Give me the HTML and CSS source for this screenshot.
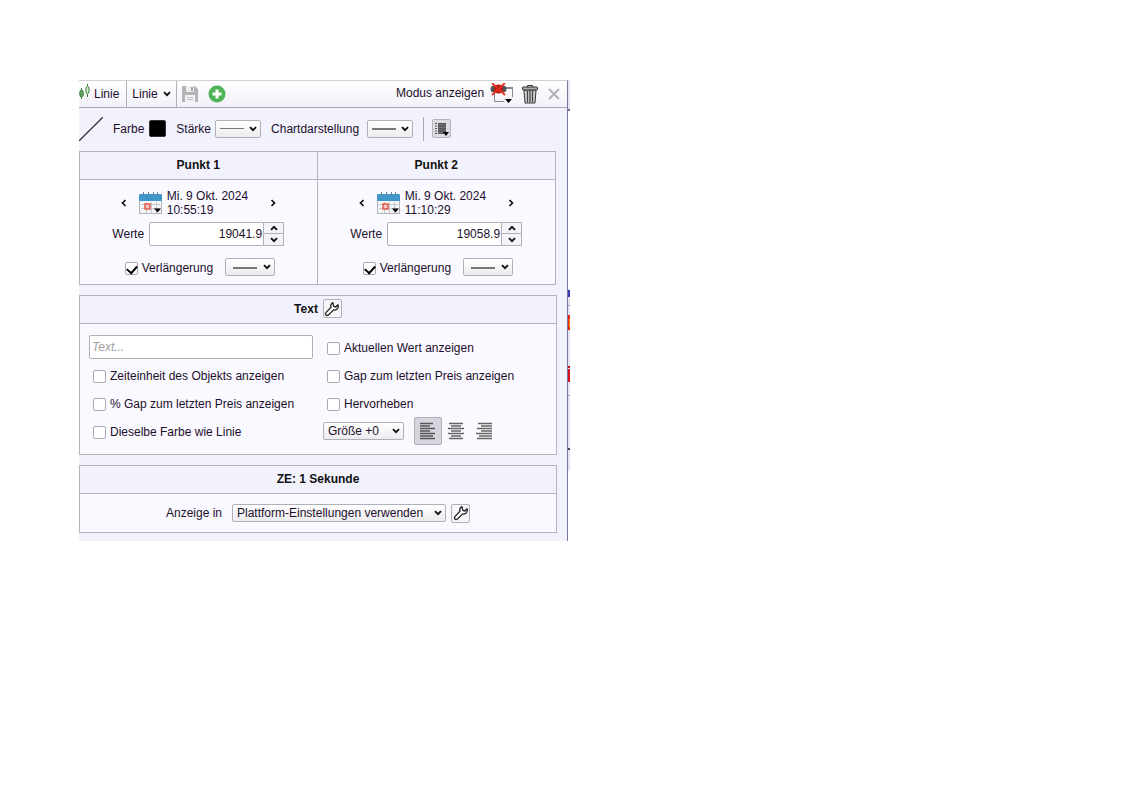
FILE: index.html
```html
<!DOCTYPE html>
<html lang="de">
<head>
<meta charset="UTF-8">
<meta name="viewport" content="width=device-width, initial-scale=1.0">
<title>Linie - Objekteigenschaften</title>
<link rel="stylesheet" href="styles.css">
</head>
<body>

<!-- Shared icons -->
<svg class="icon-defs" aria-hidden="true">
  <symbol id="chevron" viewBox="0 0 8 6">
    <path d="M1 1.2 L4 4.2 L7 1.2" fill="none" stroke="#111" stroke-width="1.9"/>
  </symbol>
  <symbol id="wrench" viewBox="0 0 16 16">
    <path d="M9 1.6 C7 2.6 6.4 4.4 7 6.3 L1.9 11.6 C.6 13.3 2.6 15.4 4.4 14 L9.6 8.9 C12 9.5 14.2 7.8 14.4 5.2 L14 3.8 L11.9 6 L9.7 5.4 L9.3 3.6 Z" fill="#fff" stroke="#222" stroke-width="1.3" stroke-linejoin="round"/>
  </symbol>
  <symbol id="calendar" viewBox="0 0 23 22">
    <rect x=".5" y="4" width="22" height="17.500" fill="#f4f5f7" stroke="#b0b5bb"/>
    <rect x="0" y="2" width="23" height="7" rx="1" fill="#3f97c9"/>
    <path d="M4.500 0v4M9.500 0v4M14.500 0v4M18.500 0v4" stroke="#5a88a4"/>
    <path d="M2 12.500h19M2 16.500h19M7.500 10v11M12.500 10v11M17.500 10v11" stroke="#c3c8ce"/>
    <rect x="6" y="12" width="5" height="5" fill="#f8c9c2" stroke="#df5a4c" stroke-width="1.500"/>
    <path d="M15 16.500h7l-3.500 4z" fill="#000"/>
  </symbol>
</svg>

<main class="dialog">
  <div class="panel">

    <!-- Title bar -->
    <header class="titlebar">
      <div class="tab">
        <svg width="12" height="18" viewBox="0 0 12 18">
          <path d="M2.500 5v11M8.500 1v13" stroke="#357a35"/>
          <ellipse cx="2.500" cy="10.500" rx="1.800" ry="3.500" fill="#69a869" stroke="#357a35"/>
          <ellipse cx="8.500" cy="7" rx="1.600" ry="4" fill="#d9f3d4" stroke="#357a35"/>
        </svg>
        <span>Linie</span>
      </div>
      <button type="button" class="tab-menu">Linie <svg width="8" height="6"><use href="#chevron"/></svg></button>
      <button type="button" class="icon-btn save" aria-label="Speichern">
        <svg width="16" height="16" viewBox="0 0 16 16">
          <path d="M0 0h13l3 3v13H0z" fill="#b4b4b8"/>
          <rect x="4" width="8" height="6" fill="#eee"/>
          <rect x="9" y="1" width="2" height="4" fill="#a4a4a8"/>
          <rect x="3" y="9" width="10" height="7" fill="#f2f2f2"/>
          <path d="M5 11.500h6M5 13.500h6" stroke="#c2c2c6"/>
        </svg>
      </button>
      <button type="button" class="icon-btn" aria-label="Hinzufügen">
        <svg width="18" height="18" viewBox="0 0 18 18">
          <circle cx="9" cy="9" r="8.500" fill="#4fb356"/>
          <path d="M9 4.500v9M4.500 9h9" stroke="#fff" stroke-width="3"/>
        </svg>
      </button>
      <div class="titlebar-right">
        <span class="mode">Modus anzeigen</span>
        <button type="button" class="icon-btn" aria-label="Modus anzeigen">
          <svg width="24" height="22" viewBox="0 0 24 22">
            <path d="M4.500 10v8.500h10M22.500 14V4.500H15" fill="none" stroke="#88888c"/>
            <path d="M15 5h8" stroke="#88888c" stroke-width="2"/>
            <circle cx="4" cy="6" r="3.500" fill="#555"/>
            <circle cx="13" cy="6" r="3.500" fill="#555"/>
            <circle cx="8.500" cy="6" r="4.500" fill="#b31a12"/>
            <circle cx="8.500" cy="6" r="1.800" fill="#300"/>
            <path d="M2 0l13 12M15 0L2 12" stroke="#ee2c20" stroke-width="1.800"/>
            <path d="M15 16h7l-3.500 4z" fill="#000"/>
          </svg>
        </button>
        <button type="button" class="icon-btn" aria-label="Löschen">
          <svg width="16" height="20" viewBox="0 0 16 20">
            <path d="M5.500 3V1.500h5V3" fill="none" stroke="#333"/>
            <path d="M2 6h12l-1 13H3z" fill="#d2d2d2" stroke="#333"/>
            <path d="M5.500 7v11M8 7v11M10.500 7v11" stroke="#444" stroke-width="1.300"/>
            <rect x=".5" y="3" width="15" height="3" rx="1" fill="#aaa" stroke="#333"/>
          </svg>
        </button>
        <button type="button" class="icon-btn close" aria-label="Schließen">
          <svg width="12" height="12" viewBox="0 0 12 12">
            <path d="M1 1l10 10M11 1L1 11" stroke="#b0b0b5" stroke-width="2"/>
          </svg>
        </button>
      </div>
    </header>

    <!-- Line style -->
    <div class="toolbar">
      <svg class="line-preview" width="24" height="24" viewBox="0 0 24 24">
        <path d="M0 24L24 0" stroke="#333" stroke-width="1.300"/>
      </svg>
      <label for="color">Farbe</label>
      <button type="button" id="color" class="color-swatch"></button>
      <label for="strength">Stärke</label>
      <span class="select line-select thin">
        <select id="strength"><option aria-label="1"></option></select>
        <svg width="8" height="6"><use href="#chevron"/></svg>
      </span>
      <label for="chart-style" class="chart-label">Chartdarstellung</label>
      <span class="select line-select">
        <select id="chart-style"><option aria-label="Durchgezogen"></option></select>
        <svg width="8" height="6"><use href="#chevron"/></svg>
      </span>
      <span class="divider"></span>
      <button type="button" class="list-btn" aria-label="Vorlagen">
        <svg width="16" height="14" viewBox="0 0 16 14">
          <path d="M1 1.500h2M1 4h2M1 6.500h2M1 9h2M1 11.500h2" stroke="#555"/>
          <rect x="4" y="1" width="8" height="11" fill="#555"/>
          <path d="M4 3h8M4 5.500h8M4 8h8M4 10.500h8" stroke="#88888c" stroke-width=".7"/>
          <path d="M9 10h6l-3 4z" fill="#000"/>
        </svg>
      </button>
    </div>

    <!-- Anchor points -->
    <section class="points">
      <div class="point">
        <h2>Punkt 1</h2>
        <div class="point-body">
          <div class="date-row">
            <button type="button" class="icon-btn arrow" aria-label="Zurück"><svg width="6" height="8" viewBox="0 0 6 8"><path d="M4.500 1L1.500 4l3 3" fill="none" stroke="#111" stroke-width="1.700"/></svg></button>
            <button type="button" class="icon-btn" aria-label="Datum wählen"><svg width="23" height="22"><use href="#calendar"/></svg></button>
            <time datetime="2024-10-09T10:55:19">Mi. 9 Okt. 2024<br>10:55:19</time>
            <button type="button" class="icon-btn arrow" aria-label="Weiter"><svg width="6" height="8" viewBox="0 0 6 8"><path d="M1.500 1l3 3l-3 3" fill="none" stroke="#111" stroke-width="1.700"/></svg></button>
          </div>
          <div class="value-row">
            <label for="value1">Werte</label>
            <input type="text" id="value1" value="19041.9">
            <span class="spinner">
              <button type="button" aria-label="Erhöhen"><svg class="up" width="8" height="6"><use href="#chevron"/></svg></button>
              <button type="button" aria-label="Verringern"><svg width="8" height="6"><use href="#chevron"/></svg></button>
            </span>
          </div>
          <div class="extend-row">
            <input type="checkbox" id="extend1" checked>
            <label for="extend1">Verlängerung</label>
            <span class="select line-select wide">
              <select aria-label="Linienart Punkt 1"><option aria-label="Durchgezogen"></option></select>
              <svg width="8" height="6"><use href="#chevron"/></svg>
            </span>
          </div>
        </div>
      </div>
      <div class="point">
        <h2>Punkt 2</h2>
        <div class="point-body">
          <div class="date-row">
            <button type="button" class="icon-btn arrow" aria-label="Zurück"><svg width="6" height="8" viewBox="0 0 6 8"><path d="M4.500 1L1.500 4l3 3" fill="none" stroke="#111" stroke-width="1.700"/></svg></button>
            <button type="button" class="icon-btn" aria-label="Datum wählen"><svg width="23" height="22"><use href="#calendar"/></svg></button>
            <time datetime="2024-10-09T11:10:29">Mi. 9 Okt. 2024<br>11:10:29</time>
            <button type="button" class="icon-btn arrow" aria-label="Weiter"><svg width="6" height="8" viewBox="0 0 6 8"><path d="M1.500 1l3 3l-3 3" fill="none" stroke="#111" stroke-width="1.700"/></svg></button>
          </div>
          <div class="value-row">
            <label for="value2">Werte</label>
            <input type="text" id="value2" value="19058.9">
            <span class="spinner">
              <button type="button" aria-label="Erhöhen"><svg class="up" width="8" height="6"><use href="#chevron"/></svg></button>
              <button type="button" aria-label="Verringern"><svg width="8" height="6"><use href="#chevron"/></svg></button>
            </span>
          </div>
          <div class="extend-row">
            <input type="checkbox" id="extend2" checked>
            <label for="extend2">Verlängerung</label>
            <span class="select line-select wide">
              <select aria-label="Linienart Punkt 2"><option aria-label="Durchgezogen"></option></select>
              <svg width="8" height="6"><use href="#chevron"/></svg>
            </span>
          </div>
        </div>
      </div>
    </section>

    <!-- Text -->
    <section class="group">
      <h2>Text <button type="button" class="wrench-btn" aria-label="Texteinstellungen"><svg width="16" height="16"><use href="#wrench"/></svg></button></h2>
      <div class="text-grid">
        <input type="text" class="text-input" placeholder="Text..." aria-label="Text">
        <div class="check"><input type="checkbox" id="current"><label for="current">Aktuellen Wert anzeigen</label></div>
        <div class="check"><input type="checkbox" id="unit"><label for="unit">Zeiteinheit des Objekts anzeigen</label></div>
        <div class="check"><input type="checkbox" id="gap"><label for="gap">Gap zum letzten Preis anzeigen</label></div>
        <div class="check"><input type="checkbox" id="gap-percent"><label for="gap-percent">% Gap zum letzten Preis anzeigen</label></div>
        <div class="check"><input type="checkbox" id="highlight"><label for="highlight">Hervorheben</label></div>
        <div class="check"><input type="checkbox" id="same-color"><label for="same-color">Dieselbe Farbe wie Linie</label></div>
        <div class="format">
          <span class="select size-select">
            <select aria-label="Größe"><option>Größe +0</option></select>
            <svg width="8" height="6"><use href="#chevron"/></svg>
          </span>
          <button type="button" class="align-btn active" aria-label="Linksbündig">
            <svg width="16" height="18" viewBox="0 0 16 18"><path d="M0 1.500h13M0 4h10M0 6.500h15M0 9h10M0 11.500h15M0 14h13M0 16.500h15" stroke="#555" stroke-width="1.500"/></svg>
          </button>
          <button type="button" class="align-btn" aria-label="Zentriert">
            <svg width="16" height="18" viewBox="0 0 16 18"><path d="M1 1.500h14M3 4h10M0 6.500h16M3 9h10M0 11.500h16M3 14h10M1 16.500h14" stroke="#666" stroke-width="1.500"/></svg>
          </button>
          <button type="button" class="align-btn" aria-label="Rechtsbündig">
            <svg width="16" height="18" viewBox="0 0 16 18"><path d="M2 1.500h14M5 4h11M1 6.500h15M5 9h11M0 11.500h16M3 14h13M1 16.500h15" stroke="#666" stroke-width="1.500"/></svg>
          </button>
        </div>
      </div>
    </section>

    <!-- Time unit -->
    <section class="group">
      <h2>ZE: 1 Sekunde</h2>
      <div class="unit-row">
        <label for="show-in">Anzeige in</label>
        <span class="select platform-select">
          <select id="show-in"><option>Plattform-Einstellungen verwenden</option></select>
          <svg width="8" height="6"><use href="#chevron"/></svg>
        </span>
        <button type="button" class="wrench-btn" aria-label="Plattform-Einstellungen"><svg width="16" height="16"><use href="#wrench"/></svg></button>
      </div>
    </section>
  </div>

  <!-- Visible edge of the chart behind the dialog -->
  <svg class="chart-edge" width="2" height="391" viewBox="0 0 2 391">
    <rect width="2" height="391" fill="#e4e4f2"/>
    <rect y="29" width="2" height="180" fill="#fff"/>
    <rect y="29" width="2" height="2" fill="#6d6d90"/>
    <rect y="210" width="2" height="7" fill="#3a3ab0"/>
    <rect y="225" width="2" height="1" fill="#8f9be0"/>
    <rect y="235" width="2" height="15" fill="#e8250c"/>
    <rect x="1" y="239" width="1" height="8" fill="#f98a1c"/>
    <rect y="286" width="2" height="2" fill="#c80a22"/>
    <rect y="289" width="2" height="13" fill="#d80d1c"/>
    <rect y="315" width="2" height="1" fill="#9aa0cc"/>
    <rect y="368" width="2" height="2" fill="#444"/>
  </svg>
</main>

</body>
</html>
```
FILE: styles.css
```css
/* General styles */
* {
  box-sizing: border-box;
}

body {
  margin: 0;
  padding: 80px 0 0 79px;
  background-color: #fff;
  color: #1d0f2c;
  font-family: "Liberation Sans", Arial, sans-serif;
  font-size: 12px;
  line-height: 14px;
}

button,
input,
select {
  margin: 0;
  color: inherit;
  font: inherit;
}

button {
  display: flex;
  align-items: center;
  justify-content: center;
  padding: 0;
}

svg {
  display: block;
  flex: none;
}

.icon-defs {
  position: absolute;
  width: 0;
  height: 0;
}

.icon-btn {
  border: none;
  background: none;
}

/* Dialog */
.dialog {
  display: flex;
  align-items: flex-start;
  max-width: 491px;
}

.panel {
  flex: 1;
  padding-bottom: 8px;
  border-top: 1px solid #cfcfd6;
  border-right: 1px solid #77779c;
  background-color: #f2f2fd;
}

/* Title bar */
.titlebar {
  display: flex;
  align-items: center;
  height: 27px;
  border-bottom: 1px solid #a9a9b4;
  background: linear-gradient(#fff, #f1f1f8);
}

.tab,
.tab-menu {
  display: flex;
  align-items: center;
  height: 26px;
  border: none;
  border-right: 1px solid #b0b0ba;
  background: none;
}

.tab {
  gap: 3px;
  width: 48px;
}

.tab svg {
  margin-bottom: 4px;
}

.tab-menu {
  gap: 5px;
  width: 50px;
}

.save {
  margin: 0 10px 0 5px;
}

.titlebar-right {
  display: flex;
  align-items: center;
  gap: 8px;
  margin-left: auto;
  padding-right: 7px;
}

.mode {
  width: 90px;
  margin-right: -4px;
  padding-bottom: 2px;
}

.close {
  margin-left: 2px;
}

/* Toolbar */
.toolbar {
  display: flex;
  align-items: center;
  height: 43px;
  padding-bottom: 2px;
}

.line-preview {
  margin-right: 10px;
}

.color-swatch {
  width: 17px;
  height: 17px;
  margin: 0 10px 0 5px;
  border: 1px solid #333;
  border-radius: 2px;
  background-color: #000;
}

.chart-label {
  width: 92px;
}

.divider {
  width: 1px;
  height: 24px;
  margin: 0 8px 0 10px;
  background-color: #a9a9b4;
}

.list-btn {
  width: 19px;
  height: 19px;
  border: 1px solid #b4b4bc;
  border-radius: 2px;
  background-color: #dcdce2;
}

/* Selects */
.select {
  position: relative;
  display: inline-block;
}

.select select {
  display: block;
  width: 100%;
  height: 18px;
  padding: 0 4px;
  border: 1px solid #b0b0b8;
  border-radius: 2px;
  background: linear-gradient(#fff, #ececf0);
  appearance: none;
}

.select svg {
  position: absolute;
  top: 6px;
  right: 4px;
  pointer-events: none;
}

.line-select {
  width: 46px;
  margin: 0 10px 0 4px;
}

.toolbar .line-select:nth-of-type(2) {
  margin-right: 0;
}

.line-select select {
  background: linear-gradient(#777, #777) 4px 7px / 24px 2px no-repeat, linear-gradient(#fff, #ececf0);
}

.thin select {
  background-size: 24px 1px, auto;
}

.wide {
  width: 50px;
  margin: 0 0 2px 9px;
}

.wide select {
  background-position: 7px 8px, 0 0;
}

/* Section headings */
h2 {
  display: flex;
  align-items: center;
  justify-content: center;
  gap: 5px;
  height: 28px;
  margin: 0;
  padding-bottom: 2px;
  border-bottom: 1px solid #b4b4bf;
  color: #111;
  font-size: 12px;
}

/* Points */
.points {
  display: grid;
  grid-template-columns: 1fr 1fr;
  margin-right: 11px;
  border: 1px solid #b4b4bf;
}

.point:first-child {
  border-right: 1px solid #b4b4bf;
}

.point-body {
  height: 104px;
  padding-top: 8px;
  background-color: #f9f9ff;
}

.date-row,
.value-row,
.extend-row {
  display: flex;
  align-items: center;
  justify-content: center;
}

.date-row {
  height: 30px;
}

.arrow {
  width: 10px;
  height: 20px;
}

.date-row time {
  width: 101px;
  margin-left: 5px;
}

.date-row .arrow:first-child {
  margin-right: 10px;
}

.value-row {
  margin-top: 4px;
}

.value-row input {
  width: 115px;
  height: 24px;
  margin-left: 5px;
  padding: 0 1px;
  border: 1px solid #b0b0b8;
  border-radius: 2px 0 0 2px;
  background-color: #fff;
  text-align: right;
}

.spinner {
  width: 20px;
}

.spinner button {
  width: 20px;
  height: 12px;
  border: 1px solid #b0b0b8;
  border-left: none;
  background-color: #f4f4fa;
}

.spinner button + button {
  border-top: none;
}

.up {
  transform: rotate(180deg);
}

.extend-row {
  margin-top: 12px;
  padding-left: 3px;
}

.extend-row label {
  width: 74px;
}

/* Checkboxes */
input[type="checkbox"] {
  position: relative;
  width: 13px;
  height: 13px;
  margin-right: 4px;
  border: 1px solid #a9a9b2;
  border-radius: 2px;
  background-color: #fff;
  appearance: none;
}

input[type="checkbox"]:checked::after {
  content: "";
  position: absolute;
  top: 2px;
  left: 1px;
  width: 8px;
  height: 5px;
  border: solid #000;
  border-width: 0 0 2px 2px;
  transform: rotate(-48deg);
}

/* Groups */
.group {
  margin: 10px 10px 0 0;
  border: 1px solid #b4b4bf;
}

.text-grid {
  display: grid;
  grid-template-columns: 234px 1fr;
  grid-auto-rows: 28px;
  align-items: center;
  padding: 9px 10px 9px 9px;
  background-color: #f9f9ff;
}

.text-input {
  width: 224px;
  height: 24px;
  padding: 0 2px;
  border: 1px solid #b0b0b8;
  border-radius: 2px;
  background-color: #fff;
}

.text-input::placeholder {
  color: #a0a0a0;
  font-style: italic;
}

.check {
  display: flex;
  align-items: center;
  padding: 2px 0 0 4px;
}

.format {
  display: flex;
  align-items: center;
}

.size-select {
  width: 81px;
  margin-right: 10px;
}

.align-btn {
  width: 28px;
  height: 28px;
  border: 1px solid transparent;
  border-radius: 2px;
  background: none;
}

.align-btn.active {
  border-color: #b0b0b8;
  background-color: #d6d6de;
}

.wrench-btn {
  width: 19px;
  height: 19px;
  border: 1px solid #b0b0b8;
  border-radius: 2px;
  background-color: #f6f6fa;
}

/* Time unit */
.unit-row {
  display: flex;
  align-items: center;
  justify-content: center;
  height: 38px;
  background-color: #f9f9ff;
}

.platform-select {
  width: 214px;
  margin: 0 5px 0 10px;
}
```
